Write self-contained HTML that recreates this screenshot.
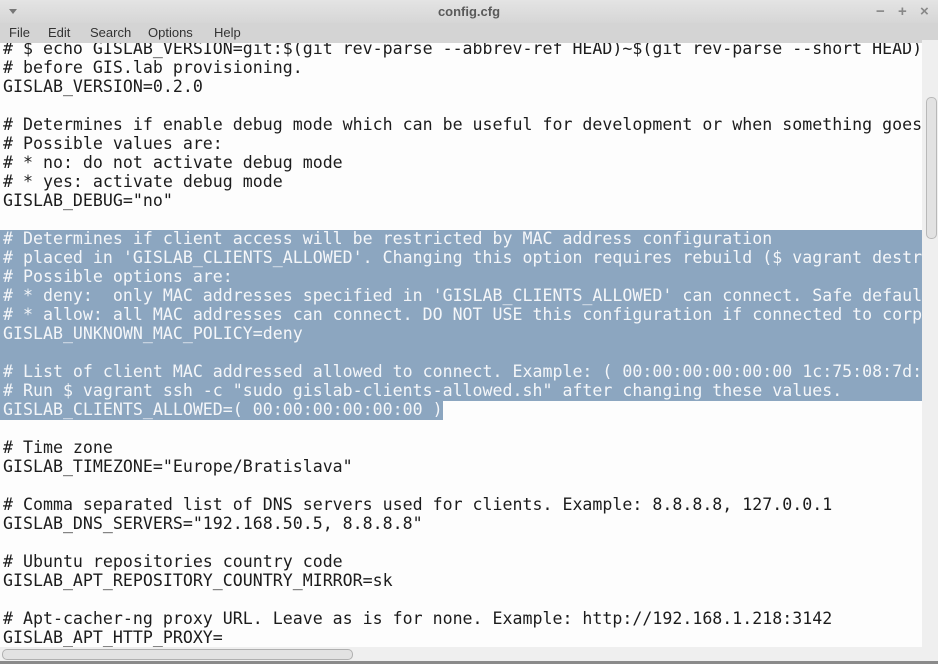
<!DOCTYPE html>
<html><head><style>
html,body{margin:0;padding:0;width:938px;height:664px;overflow:hidden;background:#fdfdfd;font-family:"Liberation Sans",sans-serif}
#title{position:absolute;left:0;top:0;width:938px;height:23px;background:linear-gradient(#e4e4e4,#d6d6d6);}
#title .t{position:absolute;left:0;width:938px;top:4px;text-align:center;font-size:13px;color:#5a5a5a;font-weight:bold}
#title .arr{position:absolute;left:9px;top:9px;width:0;height:0;border-left:4px solid transparent;border-right:4px solid transparent;border-top:5px solid #777}
#title .btn{position:absolute;top:3px;font-size:15px;color:#888;font-weight:bold}
#menu{position:absolute;left:0;top:23px;width:938px;height:20px;background:#d4d4d4;font-size:13px;color:#333}
#menu span{position:absolute;top:2px}
#ed{position:absolute;left:0;top:43px;width:922px;height:604px;overflow:hidden;background:#fdfdfd}
pre{margin:0;position:absolute;left:3px;top:-4px;font-family:"DejaVu Sans Mono","Liberation Mono",monospace;font-size:16.6px;line-height:19px;color:#1c1c1c;white-space:pre}
.hl{position:absolute;background:#8ca6c0}
.w{color:#f4f6f9}
#vs{position:absolute;left:922px;top:40px;width:16px;height:607px;background:#efefef}
#vth{position:absolute;left:926px;top:97px;width:9px;height:140px;border:1px solid #b8b8b8;border-radius:5px;background:#e2e2e2}
#hs{position:absolute;left:0;top:647px;width:938px;height:14px;background:#efefef}
#hth{position:absolute;left:2px;top:649px;width:349px;height:9px;border:1px solid #b0b0b0;border-radius:5px;background:#e2e2e2}
#bb{position:absolute;left:0;top:661px;width:938px;height:3px;background:#8a8a8a}
</style></head><body>
<div id="title"><div class="arr"></div><div class="t">config.cfg</div>
<span class="btn" style="left:876px">−</span><span class="btn" style="left:898px">+</span><span class="btn" style="left:920px">×</span></div>
<div id="menu"><span style="left:9px">File</span><span style="left:48px">Edit</span><span style="left:90px">Search</span><span style="left:148px">Options</span><span style="left:214px">Help</span></div>
<div id="ed">
<div class="hl" style="left:0;top:187px;width:922px;height:171px"></div>
<div class="hl" style="left:0;top:358px;width:443px;height:19px"></div>
<pre># $ echo GISLAB_VERSION=git:$(git rev-parse --abbrev-ref HEAD)~$(git rev-parse --short HEAD)
# before GIS.lab provisioning.
GISLAB_VERSION=0.2.0

# Determines if enable debug mode which can be useful for development or when something goes wrong
# Possible values are:
# * no: do not activate debug mode
# * yes: activate debug mode
GISLAB_DEBUG="no"

<span class="w"># Determines if client access will be restricted by MAC address configuration
# placed in 'GISLAB_CLIENTS_ALLOWED'. Changing this option requires rebuild ($ vagrant destroy
# Possible options are:
# * deny:  only MAC addresses specified in 'GISLAB_CLIENTS_ALLOWED' can connect. Safe default
# * allow: all MAC addresses can connect. DO NOT USE this configuration if connected to corporate
GISLAB_UNKNOWN_MAC_POLICY=deny

# List of client MAC addressed allowed to connect. Example: ( 00:00:00:00:00:00 1c:75:08:7d:
# Run $ vagrant ssh -c "sudo gislab-clients-allowed.sh" after changing these values.
GISLAB_CLIENTS_ALLOWED=( 00:00:00:00:00:00 )</span>

# Time zone
GISLAB_TIMEZONE="Europe/Bratislava"

# Comma separated list of DNS servers used for clients. Example: 8.8.8.8, 127.0.0.1
GISLAB_DNS_SERVERS="192.168.50.5, 8.8.8.8"

# Ubuntu repositories country code
GISLAB_APT_REPOSITORY_COUNTRY_MIRROR=sk

# Apt-cacher-ng proxy URL. Leave as is for none. Example: http://192.168.1.218:3142
GISLAB_APT_HTTP_PROXY=
</pre>
</div>
<div id="vs"></div><div id="vth"></div>
<div id="hs"></div><div id="hth"></div>
<div id="bb"></div>
</body></html>
